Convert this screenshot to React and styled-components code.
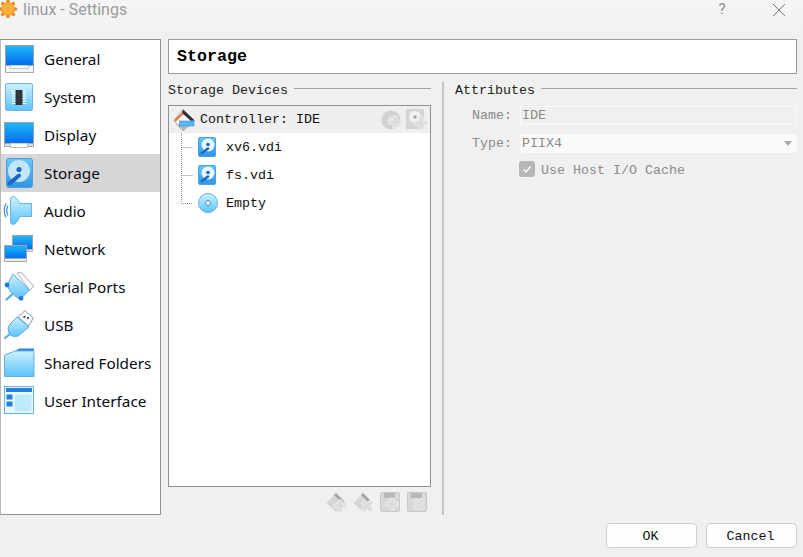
import React from 'react';
import styled, { createGlobalStyle } from 'styled-components';

const GlobalStyle = createGlobalStyle`
  html, body {
    margin: 0;
    padding: 0;
    background: #f0f0f0;
  }
`;

const mono = `"Liberation Mono", "DejaVu Sans Mono", monospace`;

const Page = styled.div`
  width: 803px;
  height: 557px;
  background: #f0f0f0;
  display: flex;
  flex-direction: column;
  overflow: hidden;
  font-family: ${mono};
  font-size: 13.33px;
  color: #111;
`;

const TitleBar = styled.div`
  height: 39px;
  flex: none;
  display: flex;
  align-items: flex-start;
  background: linear-gradient(#f5f5f5, #f0f0f0);
  font-family: Roboto, "Noto Sans", sans-serif;
`;

const AppIcon = styled.svg`
  margin: 0 0 0 -2px;
  flex: none;
`;

const WindowTitle = styled.div`
  flex: 1;
  margin-left: 3px;
  font-size: 16px;
  line-height: 19px;
  color: #9b9b9b;
`;

const HelpMark = styled.div`
  width: 16px;
  margin-right: 42px;
  font-size: 15px;
  line-height: 18px;
  text-align: center;
  color: #8c8c8c;
`;

const CloseMark = styled.svg`
  margin: 3px 17px 0 0;
`;

const Main = styled.div`
  flex: 1;
  display: flex;
  min-height: 0;
  gap: 7px;
`;

const Sidebar = styled.div`
  width: 161px;
  box-sizing: border-box;
  flex: none;
  background: #fff;
  border: 1px solid #8d9196;
  border-left-color: #b8b8b8;
  font-family: "Noto Sans", sans-serif;
  font-size: 15.3px;
  color: #0a0a14;
`;

const SideItem = styled.div`
  height: 38px;
  display: flex;
  align-items: center;
  padding-left: 2px;
  gap: 9px;
  background: ${(p) => (p.$active ? '#d6d6d6' : 'transparent')};
`;

const Content = styled.div`
  flex: 1;
  min-width: 0;
  display: flex;
  flex-direction: column;
  padding-right: 6px;
`;

const PageHeader = styled.div`
  height: 35px;
  box-sizing: border-box;
  flex: none;
  background: #fff;
  border: 1px solid #9a9a9a;
  padding-left: 8px;
  display: flex;
  align-items: center;
  font-size: 16.67px;
  font-weight: bold;
  color: #000;
`;

const Panes = styled.div`
  flex: 1;
  min-height: 0;
  display: flex;
`;

const LeftPane = styled.div`
  width: 263px;
  flex: none;
  display: flex;
  flex-direction: column;
  padding-top: 8px;
`;

const Divider = styled.div`
  width: 2px;
  flex: none;
  margin: 8px 11px 0 11px;
  background: #c4c4c4;
`;

const RightPane = styled.div`
  flex: 1;
  min-width: 0;
  padding-top: 8px;
  display: flex;
  flex-direction: column;
`;

const GroupTitle = styled.div`
  height: 18px;
  display: flex;
  align-items: center;
  gap: 6px;
  line-height: 16px;
  color: #222;
  white-space: pre;

  &::after {
    content: '';
    flex: 1;
    height: 1px;
    margin-bottom: 5px;
    background: #a2a2a2;
  }
`;

const TreeBox = styled.div`
  margin-top: 5px;
  flex: 1;
  min-height: 0;
  box-sizing: border-box;
  background: #fff;
  border: 1px solid #8f8f95;
`;

const ControllerRow = styled.div`
  height: 27px;
  display: flex;
  align-items: center;
  padding: 0 2px;
  background: #efefef;
`;

const ControllerLabel = styled.div`
  flex: 1;
  margin-left: 5px;
`;

const RowTools = styled.div`
  display: flex;
  align-items: center;
  gap: 3px;
`;

const ChildRow = styled.div`
  height: 28px;
  display: flex;
  align-items: center;
`;

const RowLabel = styled.div`
  margin-left: ${(p) => p.$gap}px;
`;

const TreeToolbar = styled.div`
  height: 28px;
  box-sizing: border-box;
  flex: none;
  display: flex;
  justify-content: flex-end;
  align-items: center;
  gap: 6px;
  padding: 2px 3px 0 0;
`;

const AttrGrid = styled.div`
  margin-top: 5px;
  display: grid;
  grid-template-columns: 65px 1fr;
  grid-template-rows: 20px 20px 20px;
  row-gap: 8px;
  align-items: center;
  color: #8a8a8a;
`;

const AttrLabel = styled.div`
  text-align: right;
  padding-right: 8px;
`;

const NameField = styled.div`
  height: 19px;
  box-sizing: border-box;
  display: flex;
  align-items: center;
  padding-left: 1px;
  background: #f0f0f0;
  border: 1px solid #fafafa;
  border-radius: 1px;
`;

const TypeField = styled(NameField)`
  background: #fafafa;
  justify-content: space-between;
  padding-right: 4px;
  border-radius: 3px;

  &::after {
    content: '';
    border-left: 4px solid transparent;
    border-right: 4px solid transparent;
    border-top: 5px solid #a8a8a8;
  }
`;

const CheckRow = styled.div`
  grid-column: 2;
  margin-top: -2px;
  display: flex;
  align-items: center;
  gap: 6px;
`;

const CheckBox = styled.div`
  width: 16px;
  height: 16px;
  margin: 0 0 2px -1px;
  border-radius: 3px;
  background: #b7b7b7;
  display: flex;
  align-items: center;
  justify-content: center;
`;

const Footer = styled.div`
  height: 42px;
  flex: none;
  display: flex;
  justify-content: flex-end;
  align-items: flex-start;
  gap: 9px;
  padding: 8px 6px 0 0;
  box-sizing: border-box;
`;

const Button = styled.div`
  width: 91px;
  height: 25px;
  box-sizing: border-box;
  padding: 2px 2px 0 0;
  display: flex;
  align-items: center;
  justify-content: center;
  background: #fdfdfd;
  border: 1px solid #d0d0d0;
  border-radius: 4px;
  color: #111;
`;

const GradientDefs = styled.svg`
  display: block;
  flex: none;
`;

const Gradients = () => (
  <GradientDefs width="0" height="0">
    <defs>
      <linearGradient id="gScreen" x1="0" y1="0" x2="0" y2="1">
        <stop offset="0" stopColor="#22b6f6" />
        <stop offset="1" stopColor="#006eee" />
      </linearGradient>
      <linearGradient id="gPale" x1="0" y1="0" x2="0" y2="1">
        <stop offset="0" stopColor="#cdf2ff" />
        <stop offset="1" stopColor="#5cc2fb" />
      </linearGradient>
      <linearGradient id="gHdd" x1="0" y1="0" x2="0" y2="1">
        <stop offset="0" stopColor="#64c9f8" />
        <stop offset="1" stopColor="#2f95e8" />
      </linearGradient>
      <radialGradient id="gGear" cx="0.5" cy="0.5" r="0.6">
        <stop offset="0" stopColor="#ffc850" />
        <stop offset="1" stopColor="#f29a2c" />
      </radialGradient>
    </defs>
  </GradientDefs>
);

const Ico = ({ size = 32, children }) => (
  <svg width={size} height={size} viewBox={`0 0 ${size} ${size}`} style={{ flex: 'none' }}>
    {children}
  </svg>
);

const GeneralIcon = () => (
  <Ico>
    <rect x="2.5" y="2.5" width="28" height="20" fill="url(#gScreen)" stroke="#9aa3aa" />
    <path d="M2.5 22.5h28v7h-28z" fill="#f4f6f7" stroke="#a3a9ad" />
    <path d="M7.5 22.5v3h18v-3" fill="#fff" stroke="#c2c6c9" />
  </Ico>
);

const SystemIcon = () => (
  <Ico>
    <rect x="2.5" y="2.5" width="27" height="27" rx="1.5" fill="url(#gPale)" stroke="#72b4ea" />
    <path
      d="M9 10h14M9 12.5h14M9 15h14M9 17.5h14M9 20h14M9 22.5h14"
      stroke="#fff"
      strokeWidth="1.2"
    />
    <rect x="12.5" y="9" width="7" height="15" fill="#30343a" />
  </Ico>
);

const DisplayIcon = () => (
  <Ico>
    <rect x="1.5" y="3.5" width="29" height="21" fill="url(#gScreen)" stroke="#9aa3aa" />
    <path d="M1.5 24.5h29v3h-29z" fill="#d9dcde" stroke="#a3a9ad" />
    <path d="M7.5 24.5v4h17v-4" fill="#fff" stroke="#b5b9bc" />
  </Ico>
);

const StorageIcon = () => (
  <Ico>
    <rect x="3.5" y="1.5" width="26" height="29" rx="2.5" fill="url(#gHdd)" stroke="#4b9fe0" />
    <circle cx="16" cy="14" r="11" fill="#c4e6f8" />
    <circle cx="16" cy="12.5" r="2.6" fill="#1c66c4" />
    <path d="M6.5 26.5 L16 18.5" stroke="#1c66c4" strokeWidth="4" strokeLinecap="round" />
  </Ico>
);

const AudioIcon = () => (
  <Ico>
    <path
      d="M7.5 5 Q7.5 1.5 10 1.5 Q13 1.5 17 8.5 H28.5 V21.5 H17 Q13 29.5 10 29.5 Q7.5 29.5 7.5 26 Z"
      fill="url(#gPale)"
      stroke="#66b3ea"
    />
    <path
      d="M5 10.5 Q2.5 15.5 5 20.5 M3 8.5 Q-0.5 15.5 3 22.5"
      fill="none"
      stroke="#3b8ddb"
      strokeWidth="1.2"
    />
  </Ico>
);

const NetworkIcon = () => (
  <Ico>
    <rect x="9.5" y="2.5" width="20" height="14" fill="url(#gScreen)" stroke="#9aa3aa" />
    <path d="M24 16.5h5.5v2h-5.5z" fill="#e6e8ea" stroke="#b0b4b8" />
    <rect x="1.5" y="12.5" width="22" height="13" fill="url(#gScreen)" stroke="#9aa3aa" />
    <path d="M1.5 25.5h22v3h-22z" fill="#eceef0" stroke="#a3a9ad" />
  </Ico>
);

const SerialIcon = () => (
  <Ico>
    <path d="M14 2 L18.5 1.5 L30.5 15 L27 19.5 Z" fill="#fbfdff" stroke="#a9adb2" />
    <path
      d="M10 3 L26.5 19 L18 27.5 Q13 27 10.5 23.5 Q6 20 4 14 Z"
      fill="url(#gPale)"
      stroke="#55a9e8"
    />
    <path d="M9 23.5 L3.5 28.5" stroke="#55a9e8" strokeWidth="2.2" strokeLinecap="round" />
    <circle cx="4" cy="14" r="2.4" fill="#2277d4" />
    <circle cx="18" cy="27.3" r="2.4" fill="#2277d4" />
  </Ico>
);

const UsbIcon = () => (
  <Ico>
    <path d="M15 8 L22 1.5 L30.5 9 L25.5 17 Z" fill="#f6fbff" stroke="#8a9aa8" />
    <path d="M20.5 7h1.8v1.8h-1.8zM24 8h1.8v1.8H24z" fill="#333" />
    <path
      d="M14 8 L26 18 L15 27 Q10.5 28.5 7.5 26 L5.5 23 Q4 18 7 15 Z"
      fill="url(#gPale)"
      stroke="#55a9e8"
    />
    <path d="M7 25 L2 29" stroke="#55a9e8" strokeWidth="2.2" strokeLinecap="round" />
  </Ico>
);

const FolderIcon = () => (
  <Ico>
    <path d="M12 4 L16 1.5 H31 V6 H12z" fill="#2f80d8" />
    <path d="M1.5 8 L12 4 H31 V29.5 H1.5 Z" fill="url(#gPale)" stroke="#62b2ea" />
  </Ico>
);

const InterfaceIcon = () => (
  <Ico>
    <rect x="1.5" y="1.5" width="29" height="27" fill="#e8f8ff" stroke="#62b2ea" />
    <rect x="3" y="3" width="26" height="4" fill="#2b7fd6" />
    <rect x="3.5" y="9.5" width="6" height="5" fill="#2b7fd6" />
    <rect x="3.5" y="16.5" width="6" height="5" fill="#2b7fd6" />
    <rect x="11.5" y="9.5" width="17" height="17" fill="#bfeafc" />
  </Ico>
);

const ControllerIcon = () => (
  <Ico size={24}>
    <path d="M12 1.5 L23.5 12.5 L12 23 L3 12.5 Z" fill="#f8f8f8" stroke="#a8a8a8" />
    <path d="M5 16 L12 23 L20 17 Z" fill="#b9b9b9" />
    <path d="M12 1.5 L23.5 12.5 L20 13 L11 5 Z" fill="#2a2f36" />
    <path d="M3 12.5 L11 4.5 L12.5 6 L5 13.5 Z" fill="#e9743a" />
    <rect x="8.5" y="13" width="14.5" height="5" fill="#58b8f4" stroke="#3a94dc" strokeWidth="0.6" />
  </Ico>
);

const DiskSmall = () => (
  <Ico size={20}>
    <rect x="0.5" y="0.5" width="17" height="19" rx="1.5" fill="url(#gHdd)" stroke="#4b9fe0" />
    <circle cx="10" cy="8" r="6.5" fill="#eaf6fd" />
    <circle cx="10" cy="7.5" r="1.8" fill="#1c66c4" />
    <path d="M4 16 L10 11.5" stroke="#1c66c4" strokeWidth="2.6" strokeLinecap="round" />
  </Ico>
);

const OpticalSmall = () => (
  <Ico size={20}>
    <circle cx="10" cy="10" r="9.5" fill="url(#gPale)" stroke="#62b2ea" />
    <circle cx="10" cy="10" r="2.6" fill="#eefaff" stroke="#3f96de" />
  </Ico>
);

const GhostPlus = ({ x, y }) => (
  <path
    d={`M${x - 2} ${y - 6}h4v4h4v4h-4v4h-4v-4h-4v-4h4z`}
    fill="#dcdcdc"
    stroke="#ececec"
    strokeWidth="1"
  />
);

const GhostCross = ({ x, y }) => (
  <path
    d={`M${x - 3} ${y - 6}l3 3 3-3 3 3-3 3 3 3-3 3-3-3-3 3-3-3 3-3-3-3z`}
    fill="#dcdcdc"
    stroke="#ececec"
    strokeWidth="1"
  />
);

const GhostDiamond = ({ cross }) => (
  <Ico size={21}>
    <path d="M10 1 L20 11 L10 20 L0.5 11 Z" fill="#d6d6d6" />
    <path d="M10 1 L18 9 L15.5 10.5 L8 3 Z" fill="#a4a4a4" />
    {cross ? <GhostCross x={14} y={14} /> : <GhostPlus x={14} y={14} />}
  </Ico>
);

const GhostFloppy = ({ cross }) => (
  <Ico size={21}>
    <rect x="0.5" y="0.5" width="19" height="19" rx="1" fill="#d8d8d8" stroke="#c8c8c8" />
    <rect x="4" y="1" width="11" height="5" fill="#b8b8b8" />
    {cross ? <GhostCross x={12} y={12} /> : <GhostPlus x={12} y={12} />}
  </Ico>
);

const GhostRound = () => (
  <Ico size={21}>
    <circle cx="10" cy="11" r="9.5" fill="#d2d2d2" />
    <circle cx="10" cy="11" r="3" fill="#e6e6e6" />
    <GhostPlus x={14} y={13} />
  </Ico>
);

const GhostDisk = () => (
  <Ico size={23}>
    <rect x="1" y="1" width="18" height="20" rx="1" fill="#d4d4d4" />
    <circle cx="10" cy="9" r="6" fill="#f2f2f2" />
    <circle cx="10" cy="9" r="1.8" fill="#a8a8a8" />
    <GhostPlus x={16} y={15} />
  </Ico>
);

const GearIcon = () => (
  <AppIcon width="22" height="20" viewBox="0 0 22 20">
    <path
      d="M10 1.5v15M2.5 9h15M4.7 3.7l10.6 10.6M15.3 3.7L4.7 14.3"
      stroke="#e88a26"
      strokeWidth="3.6"
      strokeLinecap="round"
    />
    <circle cx="10" cy="9" r="6.8" fill="url(#gGear)" />
    <circle cx="10" cy="9" r="2.4" fill="#f6a53a" />
  </AppIcon>
);

const TreeLines = ({ last }) => (
  <svg width="29" height="28" style={{ flex: 'none' }}>
    <path
      d={last ? 'M12.5 0V14.5H24' : 'M12.5 0V28M12.5 14.5H24'}
      fill="none"
      stroke="#8c8c8c"
      strokeDasharray="1 1"
    />
  </svg>
);

const sections = [
  { label: 'General', icon: GeneralIcon },
  { label: 'System', icon: SystemIcon },
  { label: 'Display', icon: DisplayIcon },
  { label: 'Storage', icon: StorageIcon, active: true },
  { label: 'Audio', icon: AudioIcon },
  { label: 'Network', icon: NetworkIcon },
  { label: 'Serial Ports', icon: SerialIcon },
  { label: 'USB', icon: UsbIcon },
  { label: 'Shared Folders', icon: FolderIcon },
  { label: 'User Interface', icon: InterfaceIcon },
];

export default function App() {
  return (
    <Page>
      <GlobalStyle />
      <Gradients />
      <TitleBar>
        <GearIcon />
        <WindowTitle>linux - Settings</WindowTitle>
        <HelpMark>?</HelpMark>
        <CloseMark width="14" height="14" viewBox="0 0 14 14">
          <path d="M1 1L13 13M13 1L1 13" stroke="#777" strokeWidth="1" />
        </CloseMark>
      </TitleBar>
      <Main>
        <Sidebar>
          {sections.map(({ label, icon: Icon, active }) => (
            <SideItem key={label} $active={active}>
              <Icon />
              <span>{label}</span>
            </SideItem>
          ))}
        </Sidebar>
        <Content>
          <PageHeader>Storage</PageHeader>
          <Panes>
            <LeftPane>
              <GroupTitle>Storage Devices</GroupTitle>
              <TreeBox>
                <ControllerRow>
                  <ControllerIcon />
                  <ControllerLabel>Controller: IDE</ControllerLabel>
                  <RowTools>
                    <GhostRound />
                    <GhostDisk />
                  </RowTools>
                </ControllerRow>
                <ChildRow>
                  <TreeLines />
                  <DiskSmall />
                  <RowLabel $gap={8}>xv6.vdi</RowLabel>
                </ChildRow>
                <ChildRow>
                  <TreeLines />
                  <DiskSmall />
                  <RowLabel $gap={8}>fs.vdi</RowLabel>
                </ChildRow>
                <ChildRow>
                  <TreeLines last />
                  <OpticalSmall />
                  <RowLabel $gap={8}>Empty</RowLabel>
                </ChildRow>
              </TreeBox>
              <TreeToolbar>
                <GhostDiamond />
                <GhostDiamond cross />
                <GhostFloppy />
                <GhostFloppy cross />
              </TreeToolbar>
            </LeftPane>
            <Divider />
            <RightPane>
              <GroupTitle>Attributes</GroupTitle>
              <AttrGrid>
                <AttrLabel>Name:</AttrLabel>
                <NameField>IDE</NameField>
                <AttrLabel>Type:</AttrLabel>
                <TypeField>PIIX4</TypeField>
                <CheckRow>
                  <CheckBox>
                    <svg width="10" height="10" viewBox="0 0 10 10">
                      <path d="M1.5 5.5L4 8L8.5 2.5" fill="none" stroke="#fff" strokeWidth="1.2" />
                    </svg>
                  </CheckBox>
                  <span>Use Host I/O Cache</span>
                </CheckRow>
              </AttrGrid>
            </RightPane>
          </Panes>
        </Content>
      </Main>
      <Footer>
        <Button>OK</Button>
        <Button>Cancel</Button>
      </Footer>
    </Page>
  );
}
